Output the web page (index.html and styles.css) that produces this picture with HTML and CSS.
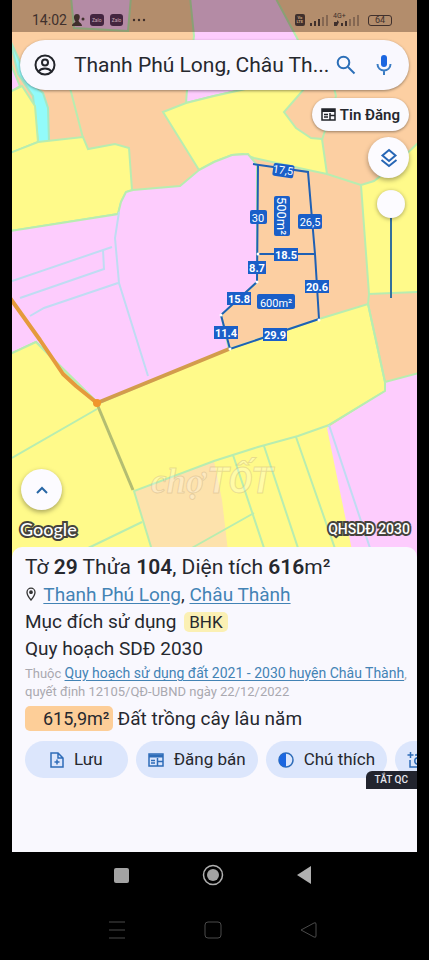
FILE: index.html
```
<!DOCTYPE html>
<html lang="vi">
<head>
    <meta charset="UTF-8">
    <meta name="viewport" content="width=device-width, initial-scale=1.0">
    <title>Quy hoạch SDĐ 2030</title>
    <link rel="stylesheet" href="styles.css">
</head>
<body>
    <div class="screen">
        <main class="map">
            <svg class="map-canvas" viewBox="12 0 405 557" preserveAspectRatio="xMidYMin slice" role="img" aria-label="Bản đồ quy hoạch">
                <rect class="orange" x="12" y="0" width="405" height="557"/>
                <!-- parcels -->
                <path class="pink edge" d="M71 -3L74 28L128 31L131 -3Z"/>
                <path class="pink edge" d="M190 -3L194 36L187 90L186 103L214 96L250 88L320 86L297 38L275 -3Z"/>
                <path class="pink edge" d="M10 62L20 86L10 92Z"/>
                <path class="river" d="M10 40L18 74L33 96L38 142L49 142L48 108L43 93L30 82L22 66Z"/>
                <path class="yellow edge" d="M10 92L22 86L35 106L38 142L10 153Z"/>
                <path class="line" d="M70 88L83 138M334 88L336 96L322 140"/>
                <path class="yellow edge" d="M10 153L38 142L83 137L88 149L115 144L129 148L132 190L126 192L121 202L118 214L10 231Z"/>
                <path class="yellow edge" d="M163 112L186 103L214 96L250 88L305 88L284 112L296 128L311 138L322 139L327 174L308 170L254 158L243 154L232 155L214 162L199 170Z"/>
                <path class="pink edge" d="M10 231L118 214L121 202L126 192L133 190L180 186L199 170L214 162L232 155L248 154L257 165L257 282L221 315L229 349L98 403L36 342L10 354Z"/>
                <path class="yellow edge" d="M361 185L374 181L396 164L419 142V292L369 294Z"/>
                <path class="line" d="M327 174L361 185"/>
                <path class="yellow edge" d="M10 354L36 342L97 404L229 349L319 319L368 304L385 382V391L329 425L356 560H10Z"/>
                <path class="tan" d="M134 491L214 461L222 500L229 560H155Z"/>
                <path class="pink" d="M385 391V382L419 373V560H354L327 428Z"/>
                <path class="line" d="M369 294L368 304L385 382L419 373M385 382V391L329 425L298 436L258 447L214 461L134 491L155 560M233 455L268 560M264 446L302 560M296 437L339 560M12 458L97 409M80 552L142 522M190 549L254 513"/>
                <path class="line-blue" d="M329 425L374 560M119 212L115 238L119 283L148 376M12 281L112 247M103 250L104 269L20 298M30 316L44 308L118 283"/>
                <!-- roads -->
                <path class="road-side" d="M97 404L133 490"/>
                <path class="road" d="M10 298L40 340L63 374L76 386L97 403"/>
                <path class="road thin" d="M97 403L229 349"/>
                <circle class="road-dot" cx="97" cy="403" r="4"/>
                <!-- measured plot -->
                <path class="plot" d="M253 164L308 172L315 254L319 319L230 349L221 315L257 282L258 165M258 254H315"/>
                <g class="nodes">
                    <circle cx="319" cy="320" r="1.5"/>
                    <circle cx="230" cy="349" r="1.5"/>
                    <circle cx="221" cy="315" r="1.5"/>
                    <circle cx="257" cy="282" r="1.5"/>
                    <circle cx="258" cy="254" r="1.5"/>
                </g>
                <g class="tag light" transform="rotate(8 283 170)">
                    <rect x="273" y="164" width="21" height="13" rx="2"/>
                    <text x="283" y="174">17,5</text>
                </g>
                <g class="tag light">
                    <rect x="250" y="210" width="17" height="14" rx="2"/>
                    <text x="258" y="222">30</text>
                    <rect x="298" y="214" width="24" height="15" rx="2"/>
                    <text x="310" y="226">26,5</text>
                    <rect x="257" y="294" width="38" height="15" rx="2"/>
                    <text x="276" y="307">600m²</text>
                </g>
                <g class="tag area" transform="rotate(90 282 216)">
                    <rect x="262" y="208" width="40" height="16" rx="2"/>
                    <text x="282" y="221">500m²</text>
                </g>
                <g class="tag">
                    <rect x="274" y="248" width="24" height="13"/>
                    <text x="286" y="259">18.5</text>
                    <rect x="248" y="261" width="18" height="13"/>
                    <text x="257" y="272">8.7</text>
                    <rect x="305" y="280" width="24" height="13"/>
                    <text x="317" y="291">20.6</text>
                    <rect x="227" y="292" width="24" height="13"/>
                    <text x="239" y="303">15.8</text>
                    <rect x="214" y="326" width="24" height="13"/>
                    <text x="226" y="337">11.4</text>
                    <rect x="263" y="328" width="24" height="13"/>
                    <text x="275" y="339">29.9</text>
                </g>
                <g class="watermark">
                    <text class="cho" x="151" y="493">chợ</text>
                    <text class="tot" x="207" y="493">TỐT</text>
                </g>
            </svg>

            <div class="status-bar">
                <span class="time">14:02</span>
                <svg width="13" height="12" viewBox="0 0 13 12"><path d="M5 0c4 0 3 5 1.500 6.500C7 9 10 9 10 12H0c0-3 3-3 3.500-4.500C1.500 5 1 0 5 0z"/><circle cx="11" cy="5" r="1.500"/></svg>
                <span class="zalo">Zalo</span>
                <span class="zalo">Zalo</span>
                <svg class="more" width="14" height="4" viewBox="0 0 14 4"><circle cx="2" cy="2" r="1.200"/><circle cx="7" cy="2" r="1.200"/><circle cx="12" cy="2" r="1.200"/></svg>
                <span class="volte">Vo<br>LTE</span>
                <svg width="18" height="12" viewBox="0 0 18 12"><path d="M0 12V9h2v3zM4 12V7h2v5zM8 12V5h2v7z"/><path class="weak" d="M12 12V3h2v9zM16 12V1h2v11z"/></svg>
                <svg width="26" height="16" viewBox="0 0 26 16"><text x="0" y="6">4G+</text><path d="M1 14V10h3v-2l2 2-2 4zM8 14v-3h2v3zM12 14v-5h2v5z"/><path class="weak" d="M16 14V7h2v7zM20 14V5h2v9zM24 14V3h2v11z"/></svg>
                <span class="battery">64</span>
            </div>

            <div class="controls">
                <form class="search">
                    <button type="button" aria-label="Tài khoản">
                        <svg width="24" height="24" viewBox="0 0 24 24" fill="none" stroke="#22242a" stroke-width="2"><circle cx="12" cy="12" r="9.500"/><circle cx="12" cy="9.500" r="3"/><path d="M5.500 18.500c3-4 10-4 13 0"/></svg>
                    </button>
                    <input type="text" aria-label="Tìm kiếm địa điểm" value="Thanh Phú Long, Châu Th...">
                    <button type="button" aria-label="Tìm">
                        <svg width="20" height="20" viewBox="0 0 20 20" fill="none" stroke="#2c6fb8" stroke-width="2"><circle cx="7.500" cy="7.500" r="5.800"/><path d="M12 12l6.500 6.500"/></svg>
                    </button>
                    <button class="mic" type="button" aria-label="Giọng nói">
                        <svg width="20" height="22" viewBox="0 0 20 22"><rect x="7" y="1" width="6" height="12" rx="3" fill="#1b66e0"/><path d="M3.500 10c0 8.500 13 8.500 13 0M10 16.500V21" fill="none" stroke="#3a7cc4" stroke-width="2"/></svg>
                    </button>
                </form>
                <button class="post-btn" type="button">
                    <svg width="15" height="13" viewBox="0 0 15 13" fill="none" stroke="#22242a" stroke-width="1.500"><rect x="1" y="1" width="13" height="11"/><path d="M1 2.500h13" stroke-width="3"/><path d="M3 6.500h4M3 9h4M9 5v7M9 7.500h5"/></svg>
                    Tin Đăng
                </button>
                <button class="round-btn" type="button" aria-label="Lớp bản đồ">
                    <svg width="18" height="20" viewBox="0 0 18 20" fill="none" stroke="#2766b5" stroke-width="2"><path d="M9 2l6.500 5.500L9 13 2.500 7.500zM1.500 12L9 18l7.500-6"/></svg>
                </button>
                <input class="opacity" type="range" min="0" max="100" value="100" aria-label="Độ mờ lớp quy hoạch">
            </div>

            <div class="map-foot">
                <button class="round-btn" type="button" aria-label="Mở rộng">
                    <svg width="12" height="8" viewBox="0 0 12 8" fill="none" stroke="#2766a5" stroke-width="2"><path d="M1 7l5-5 5 5"/></svg>
                </button>
                <div class="credits">
                    <span class="google">Google</span>
                    <span class="layer-name">QHSDĐ 2030</span>
                </div>
            </div>
        </main>

        <section class="panel">
            <h1>Tờ <b>29</b> Thửa <b>104</b>, Diện tích <b>616</b>m²</h1>
            <p class="row">
                <svg class="pin" width="12" height="14" viewBox="0 0 12 14" fill="none" stroke="#333" stroke-width="1.300"><path d="M6 13C3 9.500 2 7.500 2 5.200a4 4 0 0 1 8 0C10 7.500 9 9.500 6 13z"/><circle cx="6" cy="5.200" r="1.200" fill="#333"/></svg>
                <a href="#">Thanh Phú Long</a>, <a href="#">Châu Thành</a>
            </p>
            <p class="row">Mục đích sử dụng <span class="code">BHK</span></p>
            <p class="row">Quy hoạch SDĐ 2030</p>
            <p class="source">Thuộc <a href="#">Quy hoạch sử dụng đất 2021 - 2030 huyện Châu Thành</a>,<br>quyết định 12105/QĐ-UBND ngày 22/12/2022</p>
            <p class="land"><span class="size">615,9m²</span> Đất trồng cây lâu năm</p>
            <div class="actions">
                <button type="button">
                    <svg width="14" height="16" viewBox="0 0 14 16" fill="none" stroke="#2e6cb8" stroke-width="1.500"><path d="M1 1h7l5 5v9H1zM8 1v5h5M7 7.500v5M4.500 10h5"/></svg>
                    Lưu
                </button>
                <button type="button">
                    <svg width="16" height="14" viewBox="0 0 16 14" fill="none" stroke="#2e6cb8" stroke-width="1.500"><rect x="1" y="1" width="14" height="12"/><path d="M1 3h14" stroke-width="3"/><path d="M3 7.500h4M3 10h4M9.500 5v8M9.500 8.500H15"/></svg>
                    Đăng bán
                </button>
                <button type="button">
                    <svg width="16" height="16" viewBox="0 0 16 16"><circle cx="8" cy="8" r="7" fill="none" stroke="#2e6cb8" stroke-width="1.500"/><path d="M8 1a7 7 0 0 0 0 14z" fill="#1b66e0"/></svg>
                    Chú thích
                </button>
                <button type="button" aria-label="Chụp ảnh">
                    <svg width="18" height="18" viewBox="0 0 18 18" fill="none" stroke="#2e6cb8" stroke-width="1.500"><path d="M3.500 1v6M0.500 4h6M8 4h2l1-2h4l1 2h2v12H3V9"/><circle cx="11" cy="10" r="3.200"/></svg>
                </button>
            </div>
            <button class="ad-off" type="button">TẮT QC</button>
        </section>
    </div>

    <nav class="nav main-nav">
        <button type="button" aria-label="Gần đây"><svg width="24" height="24" viewBox="0 0 24 24"><rect x="5" y="5" width="15" height="15" rx="2" fill="#a3a3a3"/></svg></button>
        <button type="button" aria-label="Trang chủ"><svg width="24" height="24" viewBox="0 0 24 24"><circle cx="12" cy="12" r="9.500" fill="none" stroke="#b0b0b0" stroke-width="1.500"/><circle cx="12" cy="12" r="6" fill="#a3a3a3"/></svg></button>
        <button type="button" aria-label="Quay lại"><svg width="24" height="24" viewBox="0 0 24 24"><path d="M4 12L18 3v18z" fill="#b0b0b0"/></svg></button>
    </nav>
    <nav class="nav sub-nav">
        <button type="button" aria-label="Gần đây"><svg width="24" height="24" viewBox="0 0 24 24"><path d="M4 4h16M4 12h16M4 20h16"/></svg></button>
        <button type="button" aria-label="Trang chủ"><svg width="24" height="24" viewBox="0 0 24 24"><rect x="4" y="4" width="16" height="16" rx="3"/></svg></button>
        <button type="button" aria-label="Quay lại"><svg width="24" height="24" viewBox="0 0 24 24"><path d="M4 12L17 5q2-1 2 1v12q0 2-2 1z"/></svg></button>
    </nav>
</body>
</html>
```
FILE: styles.css
```
* {
    margin: 0;
    padding: 0;
    box-sizing: border-box;
}

body {
    font-family: Roboto, 'Noto Sans', sans-serif;
    background: #000;
    color: #26282e;
    min-height: 100vh;
    display: flex;
    flex-direction: column;
}

button {
    font: inherit;
    color: inherit;
    background: none;
    border: none;
    cursor: pointer;
}

svg {
    display: block;
    flex-shrink: 0;
}

.screen {
    flex: 1;
    display: flex;
    flex-direction: column;
    margin: 0 12px;
    overflow: hidden;
}

/* map */
.map {
    flex: 1;
    position: relative;
    display: flex;
    flex-direction: column;
    justify-content: space-between;
    overflow: hidden;
}

.map-canvas {
    position: absolute;
    top: 0;
    left: 0;
    width: 100%;
    height: 100%;
}

.orange { fill: #fccfa2; }
.yellow { fill: #fffa8a; }
.pink { fill: #fdccfd; }
.tan { fill: #fde2ac; }
.river { fill: #92fbfa; stroke: #a5e8c4; stroke-width: 2; }

.edge,
.line {
    stroke: #b8edb0;
    stroke-width: 2;
}

.line,
.line-blue,
.road,
.road-side,
.plot {
    fill: none;
}

.line-blue { stroke: #bfdcf2; stroke-width: 2; }
.road { stroke: #e59a3c; stroke-width: 4; stroke-linejoin: round; }
.road.thin { stroke: #d39c4c; }
.road-side { stroke: #b3bd72; stroke-width: 3; }
.road-dot { fill: #f0962c; }
.plot { stroke: #1f60b4; stroke-width: 2; }
.nodes { fill: #fff; }
.tag rect { fill: #1a5fc8; }

.tag text {
    fill: #fff;
    font-size: 11px;
    font-weight: 700;
    text-anchor: middle;
}

.tag.light text { font-weight: 400; }
.tag.area text { font-size: 13px; font-weight: 400; }

.watermark {
    fill: rgba(255, 255, 255, 0.25);
    stroke: rgba(190, 165, 120, 0.35);
    font-style: italic;
    font-weight: 700;
}

.cho { font-family: 'Liberation Serif', serif; font-size: 35px; }
.tot { font-size: 36px; }

.status-bar {
    position: relative;
    display: flex;
    align-items: center;
    gap: 5px;
    height: 32px;
    padding: 8px 25px 0 20px;
    background: rgba(60, 35, 20, 0.38);
    color: #40302c;
    fill: #40302c;
}

.time { font-size: 14px; }

.zalo {
    padding: 2px;
    border-radius: 3px;
    background: #43253f;
    color: #c9a9b4;
    font-size: 5px;
    line-height: 8px;
}

.zalo + .zalo { margin-left: 1px; }
.more { margin: 0 auto 0 4px; }

.volte {
    padding: 2px;
    border-radius: 2px;
    background: #40302c;
    color: #c9a27c;
    font-size: 4px;
    font-weight: 700;
    line-height: 4px;
    text-align: center;
}

.status-bar text { font-size: 7px; }
.weak { opacity: 0.4; }

.battery {
    width: 24px;
    margin-left: 4px;
    border: 1px solid #40302c;
    border-radius: 3px;
    font-size: 9px;
    line-height: 9px;
    text-align: center;
}

.controls {
    position: relative;
    flex: 1;
    display: flex;
    flex-direction: column;
    align-items: flex-end;
    padding: 8px 8px 0;
}

.search {
    align-self: stretch;
    display: flex;
    align-items: center;
    gap: 4px;
    height: 50px;
    padding: 0 15px 0 13px;
    border-radius: 25px;
    background: #f9f8fe;
    box-shadow: 0 1px 3px rgba(0, 0, 0, 0.4);
}

.search input {
    flex: 1;
    min-width: 0;
    margin-left: 13px;
    border: none;
    outline: none;
    background: none;
    color: inherit;
    font: 21px Roboto, 'Noto Sans', sans-serif;
    text-overflow: ellipsis;
}

.mic { margin-left: 14px; }

.post-btn {
    display: flex;
    align-items: center;
    gap: 4px;
    height: 33px;
    margin-top: 8px;
    padding: 0 9px;
    border-radius: 17px;
    background: #fbfafe;
    box-shadow: 0 1px 3px rgba(0, 0, 0, 0.4);
    font-size: 15px;
    font-weight: 600;
}

.round-btn {
    display: flex;
    align-items: center;
    justify-content: center;
    width: 41px;
    height: 41px;
    border-radius: 50%;
    background: #fcfbff;
    box-shadow: 0 2px 5px rgba(0, 0, 0, 0.35);
}

.controls .round-btn { margin-top: 6px; }

.opacity {
    appearance: none;
    writing-mode: vertical-lr;
    direction: rtl;
    width: 28px;
    height: 108px;
    margin: 12px 4px 0 0;
    background: linear-gradient(#34709c, #34709c) center / 2px 100% no-repeat;
}

.opacity::-webkit-slider-thumb {
    appearance: none;
    width: 28px;
    height: 28px;
    border-radius: 50%;
    background: #fcfbff;
    box-shadow: 0 1px 4px rgba(0, 0, 0, 0.35);
}

.map-foot {
    position: relative;
    padding: 0 7px 17px 9px;
}

.credits {
    display: flex;
    align-items: center;
    justify-content: space-between;
    margin-top: 8px;
    color: #fff;
    line-height: 22px;
    -webkit-text-stroke: 4px #45433c;
    paint-order: stroke fill;
}

.google { font: 500 18px/22px Lato, sans-serif; margin-left: -1px; }
.layer-name { font-size: 14px; font-weight: 500; }

/* parcel details */
.panel {
    position: relative;
    margin-top: -10px;
    padding: 6px 0 74px 13px;
    border-radius: 10px 10px 0 0;
    background: #f9f8fe;
    font-size: 19px;
    line-height: 27px;
    white-space: nowrap;
}

.panel h1 {
    font-size: 21px;
    font-weight: 400;
    line-height: 28px;
}

.panel b { font-weight: 600; }
.panel a { color: #4383b5; text-underline-offset: 2px; }
.pin { display: inline-block; margin-right: 2px; }

.code {
    display: inline-block;
    margin-left: 3px;
    padding: 0 5px;
    border-radius: 5px;
    background: #fbf0b4;
    font-size: 17px;
    line-height: 20px;
}

.source {
    margin-top: 2px;
    color: #aaa9b0;
    font-size: 13px;
    line-height: 18px;
}

.source a { font-size: 14px; }

.land {
    display: flex;
    align-items: center;
    gap: 4px;
    margin-top: 4px;
}

.size {
    padding: 0 4px 0 18px;
    border-radius: 5px;
    background: #fdce98;
    font-size: 18px;
    line-height: 25px;
}

.actions {
    display: flex;
    gap: 8px;
    margin-top: 9px;
    overflow: hidden;
}

.actions button {
    flex-shrink: 0;
    display: flex;
    align-items: center;
    gap: 10px;
    height: 37px;
    padding: 0 12px;
    border-radius: 19px;
    background: #dce6fc;
    font-size: 17px;
}

.actions button:first-child { padding: 0 25px; }

.ad-off {
    position: absolute;
    right: 0;
    bottom: 63px;
    padding: 0 9px;
    border-radius: 6px 0 0 0;
    background: #22242e;
    color: #e8e8ee;
    font-size: 10px;
    font-weight: 500;
    line-height: 18px;
}

/* system navigation */
.nav {
    display: flex;
    justify-content: center;
    gap: 68px;
}

.nav button { height: 24px; }

.main-nav {
    height: 53px;
    padding: 11px 3px 0 0;
}

.sub-nav {
    height: 55px;
    padding: 13px 3px 0 0;
    gap: 72px;
}

.sub-nav svg {
    fill: none;
    stroke: #4a4a4a;
    stroke-width: 1;
}
```
